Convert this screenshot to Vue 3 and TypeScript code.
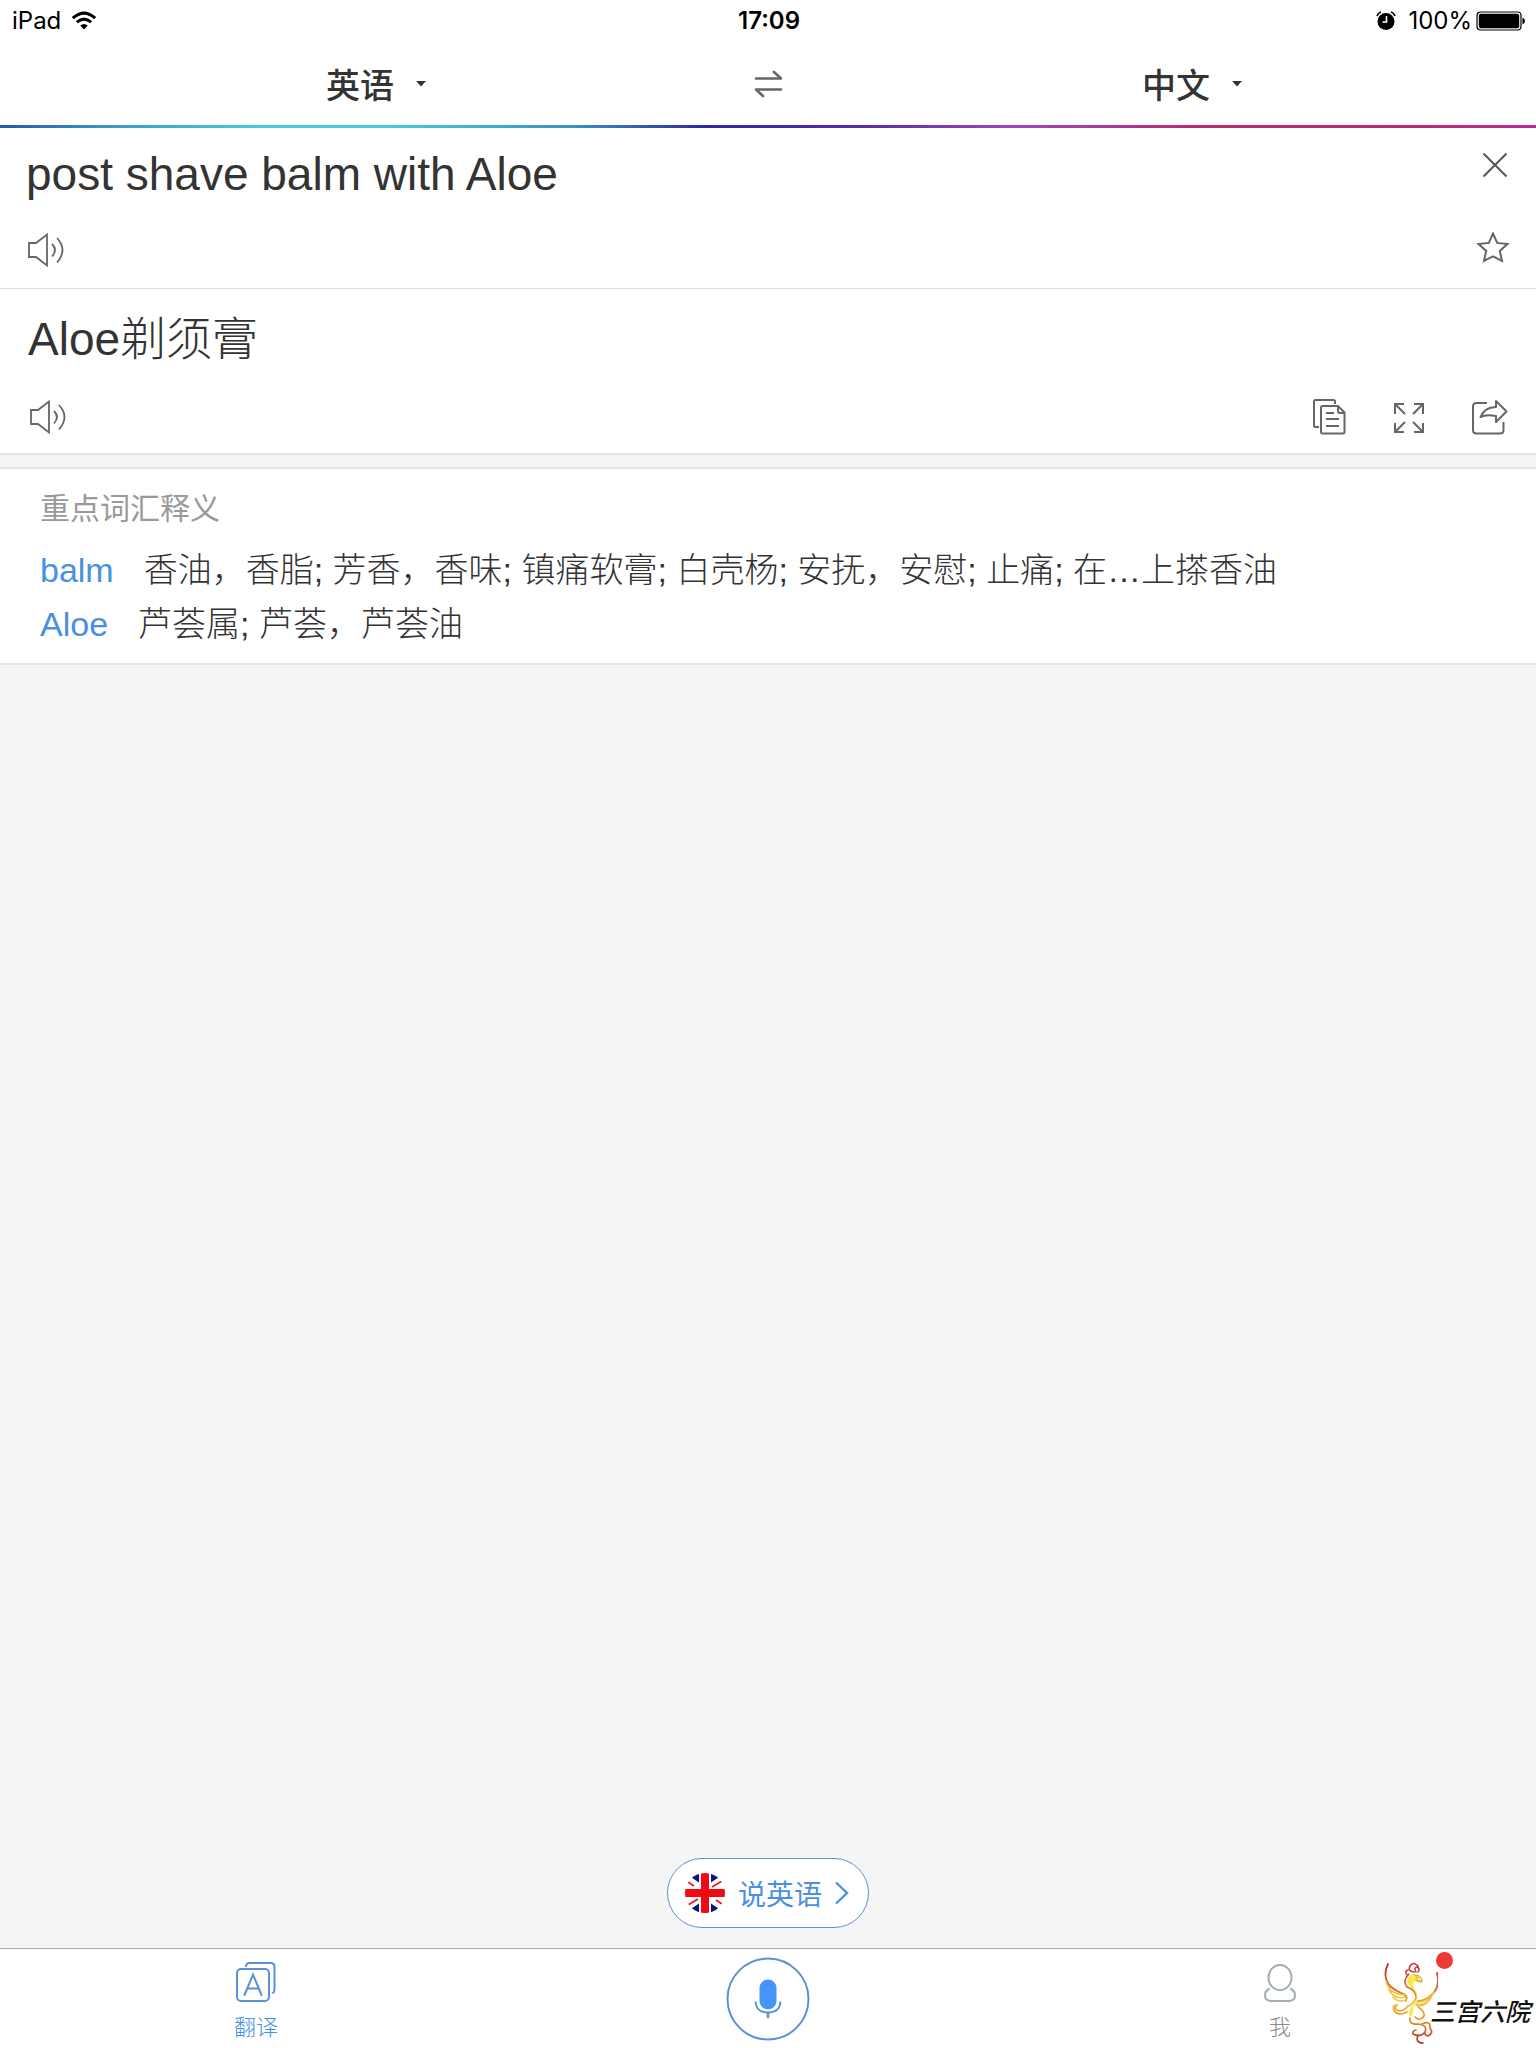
<script setup lang="ts">
import { ref } from 'vue'

interface Entry {
  word: string
  meaning: string
}

const source = ref('post shave balm with Aloe')
const from = ref('英语')
const to = ref('中文')

const entries: Entry[] = [
  { word: 'balm', meaning: '香油，香脂; 芳香，香味; 镇痛软膏; 白壳杨; 安抚，安慰; 止痛; 在…上搽香油' },
  { word: 'Aloe', meaning: '芦荟属; 芦荟，芦荟油' },
]
</script>

<template>
  <div class="app">
    <header class="top">
      <div class="status">
        <div class="status-left">
          <span>iPad</span>
          <svg width="26" height="20" viewBox="0 0 26 20" aria-hidden="true">
            <g fill="none" stroke="#000" stroke-width="3">
              <path d="M1.800 7.200Q13 -3 24.200 7.200" />
              <path d="M5.800 11.200Q13 5 20.200 11.200" />
            </g>
            <path d="M9.200 14.600Q13 11.400 16.800 14.600L13 18.600Z" />
          </svg>
        </div>
        <span class="clock">17:09</span>
        <div class="status-right">
          <svg class="alarm" width="20" height="20" viewBox="0 0 20 20" aria-hidden="true">
            <circle cx="10" cy="10.500" r="8.500" />
            <path d="M1 5Q2 2 5 1M19 5Q18 2 15 1" fill="none" stroke="#000" stroke-width="1.600" />
            <path d="M10.500 5V11H6.500" fill="none" stroke="#fff" stroke-width="1.600" />
          </svg>
          <span>100%</span>
          <svg class="battery" width="50" height="20" viewBox="0 0 50 20" aria-hidden="true">
            <rect x="1" y="1" width="44" height="18" rx="3.500" fill="#fff" stroke="#000" stroke-width="1.200" />
            <rect x="2.800" y="2.800" width="40.400" height="14.400" rx="2" />
            <path d="M46.500 6.500Q49 7.500 49 10T46.500 13.500Z" />
          </svg>
        </div>
      </div>
      <nav class="languages">
        <button class="language" type="button">
          <span>{{ from }}</span>
          <svg width="10" height="6" viewBox="0 0 10 6" aria-hidden="true"><path d="M0 0H10L5 5.500Z" fill="#333" /></svg>
        </button>
        <button class="swap" type="button" aria-label="交换语言">
          <svg width="30" height="28" viewBox="0 0 30 28" fill="none" stroke="#666" stroke-width="2.600" stroke-linecap="round" stroke-linejoin="round" aria-hidden="true">
            <path d="M3 8.500H28L21 2" />
            <path d="M28 19.500H3L10 26" />
          </svg>
        </button>
        <button class="language target" type="button">
          <span>{{ to }}</span>
          <svg width="10" height="6" viewBox="0 0 10 6" aria-hidden="true"><path d="M0 0H10L5 5.500Z" fill="#333" /></svg>
        </button>
      </nav>
      <div class="rainbow"></div>
    </header>

    <main class="content">
      <section class="panel source">
        <div class="row">
          <input v-model="source" class="source-text" type="text" aria-label="原文" />
          <button class="close" type="button" aria-label="清除">
            <svg width="26" height="26" viewBox="0 0 26 26" fill="none" stroke="#555" stroke-width="2" aria-hidden="true">
              <path d="M1.500 1.500L24.500 24.500M24.500 1.500L1.500 24.500" />
            </svg>
          </button>
        </div>
        <div class="row tools">
          <button type="button" aria-label="朗读原文">
            <svg width="40" height="36" viewBox="-2 -1 40 36" fill="none" stroke="#666" stroke-width="1.800" aria-hidden="true">
              <path d="M1 10H8L19 1.500V32.500L8 24H1Z" />
              <path d="M24 11Q30 17 24 23.500" />
              <path d="M29 5Q40 17 29 29.500" />
            </svg>
          </button>
          <button class="star" type="button" aria-label="收藏">
            <svg width="34" height="32" viewBox="0 2 34 32" fill="none" stroke="#666" stroke-width="2" aria-hidden="true">
              <path d="M17 3.500L21.200 12.900L31.500 14L23.800 20.900L26 31L17 26.400L8 31L10.200 20.900L2.500 14L12.800 12.900Z" />
            </svg>
          </button>
        </div>
      </section>

      <section class="panel result">
        <p class="result-text">Aloe剃须膏</p>
        <div class="row tools">
          <button type="button" aria-label="朗读译文">
            <svg width="40" height="36" viewBox="-2 -1 40 36" fill="none" stroke="#666" stroke-width="1.800" aria-hidden="true">
              <path d="M1 10H8L19 1.500V32.500L8 24H1Z" />
              <path d="M24 11Q30 17 24 23.500" />
              <path d="M29 5Q40 17 29 29.500" />
            </svg>
          </button>
          <div class="actions">
            <button type="button" aria-label="复制">
              <svg width="36" height="36" viewBox="0 0 36 36" fill="none" stroke="#666" stroke-width="2" stroke-linejoin="round" aria-hidden="true">
                <path d="M23 5V2.500Q23 1 21.500 1H3.500Q2 1 2 2.500V26.500Q2 28 3.500 28H7" />
                <path d="M26 7H10.500Q9 7 9 8.500V33Q9 34.500 10.500 34.500H31Q32.500 34.500 32.500 33V13.500Z" />
                <path d="M26 7V12Q26 14 28 14H32" />
                <path d="M14 14H22M14 20H27M14 27H27" />
              </svg>
            </button>
            <button type="button" aria-label="全屏">
              <svg width="36" height="36" viewBox="0 0 36 36" fill="none" stroke="#666" stroke-width="2" aria-hidden="true">
                <path d="M12 5H3V15M3 5L13 15" />
                <path d="M22 5H31V15M31 5L21 15" />
                <path d="M12 33H3V24M3 33L13 23" />
                <path d="M22 33H31V24M31 33L21 23" />
              </svg>
            </button>
            <button type="button" aria-label="分享">
              <svg width="36" height="36" viewBox="0 0 36 36" fill="none" stroke="#666" stroke-width="2" stroke-linejoin="round" aria-hidden="true">
                <path d="M15 4H4.500Q1 4 1 7.500V31Q1 34.500 4.500 34.500H28Q31.500 34.500 31.500 31V23" />
                <path d="M24 2L34.500 12.500L24 23V17Q14 15 8.500 18Q12 8.500 24 8Z" />
              </svg>
            </button>
          </div>
        </div>
      </section>

      <section class="panel glossary">
        <h2>重点词汇释义</h2>
        <dl>
          <div v-for="entry in entries" :key="entry.word" class="entry">
            <dt>{{ entry.word }}</dt>
            <dd>{{ entry.meaning }}</dd>
          </div>
        </dl>
      </section>
    </main>

    <div class="speak-row">
      <button class="speak" type="button">
        <svg width="40" height="40" viewBox="0 0 40 40" aria-hidden="true">
          <defs><clipPath id="flag-disc"><circle cx="20" cy="20" r="20" /></clipPath></defs>
          <g clip-path="url(#flag-disc)">
            <rect width="40" height="40" fill="#fff" />
            <path d="M14 0V9.500L5 3.500ZM26 0V9.500L35 3.500ZM14 40V30.500L5 36.500ZM26 40V30.500L35 36.500Z" fill="#14127a" />
            <path d="M3 9L9 13M37 8L27 14M3 32L13 26M37 31L31 27" stroke="#e8202c" stroke-width="2" />
            <path d="M16 0H24V16H40V24H24V40H16V24H0V16H16Z" fill="#f20a12" />
          </g>
        </svg>
        <span>说英语</span>
        <svg width="14" height="24" viewBox="0 0 14 24" fill="none" stroke="#4a90e2" stroke-width="2.400" aria-hidden="true">
          <path d="M1 1.500L12 12L1 22.500" />
        </svg>
      </button>
    </div>

    <nav class="tabs">
      <button class="tab active" type="button">
        <svg width="40" height="40" viewBox="0 0 40 40" fill="none" stroke="#5a91d6" stroke-width="2" stroke-linecap="round" aria-hidden="true">
          <rect x="1" y="7" width="32" height="32" rx="4" />
          <path d="M10 4Q10.500 1 13.500 1H34.500Q38.500 1 38.500 5V27Q38.500 30 37 31" />
          <path d="M8.500 33L17 12.500L25.500 33M11.500 26.500H22.500" />
        </svg>
        <span>翻译</span>
      </button>
      <button class="tab voice" type="button" aria-label="语音翻译">
        <svg width="84" height="84" viewBox="0 0 84 84" fill="none" stroke="#5a91d6" aria-hidden="true">
          <circle cx="42" cy="42" r="40.500" fill="#fff" stroke-width="2" />
          <rect x="33.500" y="22.500" width="17" height="30" rx="8.500" fill="#4595ff" stroke="none" />
          <path d="M29.500 44.500Q30 55.500 42 55.500T54.500 44.500" stroke-width="1.800" />
          <path d="M42 55.500V61" stroke-width="2.600" />
        </svg>
      </button>
      <button class="tab" type="button">
        <svg width="32" height="40" viewBox="0 0 32 40" fill="none" stroke="#a3adb7" stroke-width="2" stroke-linecap="round" aria-hidden="true">
          <ellipse cx="16" cy="15.500" rx="11.500" ry="12.500" />
          <path d="M5 27Q1 29 1 33Q1 39 7 39H25Q31 39 31 33Q31 29 27 27" />
        </svg>
        <span>我</span>
      </button>
      <div class="mark">
        <svg width="58" height="84" viewBox="0 0 58 84" fill="none" stroke-linecap="round" aria-hidden="true">
          <defs>
            <linearGradient id="plume" x1="0" y1="0" x2="0" y2="84" gradientUnits="userSpaceOnUse">
              <stop offset="0" stop-color="#c3242b" />
              <stop offset="0.300" stop-color="#d9632b" />
              <stop offset="0.500" stop-color="#f0b52a" />
              <stop offset="0.720" stop-color="#e08a28" />
              <stop offset="1" stop-color="#bd1624" />
            </linearGradient>
          </defs>
          <path d="M32 12Q26 16 28 21Q30 26 35 30Q39 38 33 43Q27 49 30 55Q34 54 33 45Q41 36 35 28Q31 22 35 19L41 21Q40 14 32 12Z" fill="#fbe84a" />
          <path d="M29 12Q22 19 27 25Q36 28 36 36Q34 41 29 44M34 10Q27 9 30 4Q33 -1 38 4M36 10Q33 5 38 5Q40 8 38 10M27 13Q24 9 28 8" stroke="url(#plume)" stroke-width="1.500" />
          <path d="M34 13Q42 13 42 20L36 18M36 15L38 15.500" stroke="#d99c24" stroke-width="1.200" />
          <path d="M8 2Q2 14 10 24Q17 30 24 32Q28 35 26 39M57 11Q61 27 49 35Q43 39 38 39" stroke="url(#plume)" stroke-width="1.800" />
          <path d="M6 19Q9 32 24 33M9 28Q15 38 25 35M13 35Q18 41 26 38M54 30Q49 41 37 40M51 36Q46 44 36 42M47 41Q42 45 36 43" stroke="#f0c53a" stroke-width="1.500" />
          <path d="M28 44Q24 49 19 49Q13 47 17 43Q11 43 15 50Q20 54 27 50M38 45Q45 49 44 54Q40 60 35 55M30 56Q29 63 38 62Q48 63 45 70Q40 76 33 72Q32 69 36 68M42 62Q51 58 50 66Q54 71 48 74Q44 73 45 70M38 73Q35 81 43 81" stroke="url(#plume)" stroke-width="1.700" />
        </svg>
        <span class="mark-text">三宫六院</span>
        <span class="badge"></span>
      </div>
    </nav>
  </div>
</template>

<style>
body {
  margin: 0;
  background: #f5f5f5;
}
</style>

<style scoped>
.app {
  display: flex;
  flex-direction: column;
  min-height: 100vh;
  background: #f5f5f5;
  color: #333;
  font-family: "Liberation Sans", "Noto Sans CJK SC", sans-serif;
}

button {
  display: flex;
  align-items: center;
  justify-content: center;
  padding: 0;
  border: 0;
  background: none;
  color: inherit;
  font: inherit;
}

svg {
  display: block;
  flex: none;
}

.top {
  background: #fff;
}

.status {
  display: grid;
  grid-template-columns: 1fr auto 1fr;
  align-items: center;
  height: 42px;
  padding: 0 10px 0 12px;
  color: #000;
  font: 400 24px/42px Inter, sans-serif;
}

.status-left,
.status-right {
  display: flex;
  align-items: center;
}

.status-left {
  gap: 10px;
}

.status-right {
  justify-content: flex-end;
}

.alarm {
  margin-right: 12px;
}

.battery {
  margin-left: 4px;
}

.clock {
  font-weight: 600;
}

.languages {
  display: grid;
  grid-template-columns: 1fr 32px 1fr;
  height: 83px;
}

.language {
  gap: 22px;
  color: #333;
  font: 500 34px/50px "Noto Sans CJK SC", sans-serif;
}

.target {
  padding-left: 64px;
}

.rainbow {
  height: 3px;
  background: linear-gradient(90deg, #2458ad 0%, #3d9fc8 8%, #44ced4 17%, #44ced4 25%, #3a94c4 37%, #2f27a0 46%, #5a2ba9 56%, #9c45bf 66%, #bf2869 79%, #c02870 90%, #b82b90 100%);
}

.panel {
  background: #fff;
}

.row {
  display: flex;
  align-items: center;
  justify-content: space-between;
}

.source {
  padding: 16px 26px 20px;
  border-bottom: 1px solid #d9d9d9;
}

.source-text {
  flex: 1;
  min-width: 0;
  height: 60px;
  padding: 0;
  border: 0;
  outline: 0;
  background: none;
  color: #333;
  font: 400 46px/60px "Liberation Sans", sans-serif;
}

.close {
  align-self: flex-start;
  padding: 8px 2px 0 0;
}

.tools {
  margin-top: 28px;
}

.star {
  align-self: flex-start;
}

.result {
  padding: 18px 28px;
  border-bottom: 2px solid #e4e4e4;
}

.result-text {
  margin: 0;
  font-size: 46px;
  font-weight: 300;
  line-height: 64px;
}

.actions {
  display: flex;
  gap: 44px;
}

.glossary {
  margin-top: 12px;
  padding: 20px 40px 12px;
  border-top: 2px solid #e4e4e4;
  border-bottom: 2px solid #e4e4e4;
}

.glossary h2 {
  margin: 0 0 14px;
  color: #999;
  font-size: 30px;
  font-weight: 400;
  line-height: 40px;
}

.glossary dl {
  margin: 0;
}

.entry {
  display: flex;
  gap: 30px;
  font-size: 34px;
  font-weight: 300;
  line-height: 54px;
}

.entry dt {
  color: #4a90e2;
}

.entry dd {
  margin: 0;
}

.speak-row {
  display: flex;
  justify-content: center;
  margin-top: auto;
  padding-bottom: 20px;
}

.speak {
  gap: 13px;
  height: 70px;
  padding: 0 19px 0 17px;
  border: 1px solid #5a91d6;
  border-radius: 35px;
  background: #fff;
  color: #4a90e2;
  font-size: 28px;
  font-weight: 400;
}

.tabs {
  position: relative;
  display: grid;
  grid-template-columns: repeat(3, 1fr);
  height: 99px;
  border-top: 1px solid #aaa;
  background: #fff;
}

.tab {
  flex-direction: column;
  justify-content: flex-start;
  gap: 10px;
  padding-top: 13px;
  color: #8a8a8a;
  font-size: 22px;
  font-weight: 300;
  line-height: 32px;
}

.voice {
  padding-top: 8px;
}

.tab.active {
  color: #4a90e2;
}

.mark {
  position: absolute;
  right: 6px;
  bottom: 2px;
  display: flex;
  align-items: center;
}

.mark-text {
  margin: 16px 0 0 -8px;
  color: #111;
  font-size: 25px;
  font-style: italic;
  font-weight: 500;
  line-height: 32px;
}

.badge {
  position: absolute;
  top: -10px;
  left: 56px;
  width: 17px;
  height: 17px;
  border-radius: 50%;
  background: #ee3a37;
}
</style>
